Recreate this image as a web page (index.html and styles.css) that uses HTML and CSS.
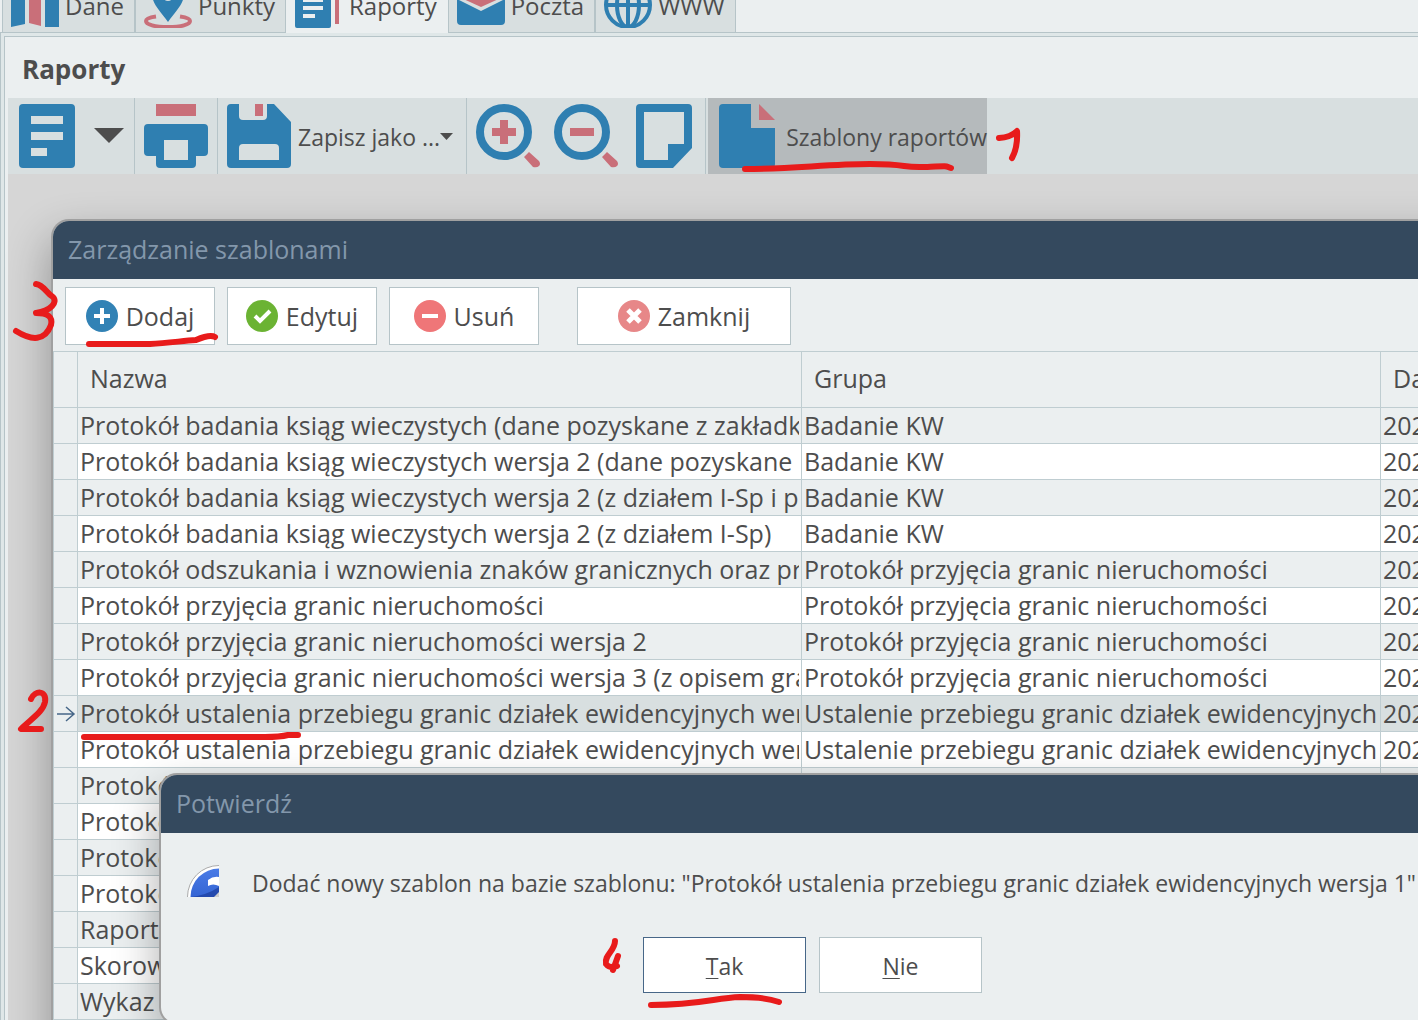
FILE: index.html
```html
<!DOCTYPE html>
<html lang="pl">
<head>
<meta charset="utf-8">
<title>Raporty</title>
<link rel="stylesheet" href="styles.css">
</head>
<body>
<div class="app">
  <nav class="tabs" aria-label="Moduły">
    <button class="tab" type="button">
      <svg class="tab-icon" viewBox="0 0 48 48"><path class="blue" d="M0 3L14 0V44L0 47zM34 0L48 3V47L34 47z"/><path class="pink" d="M18 0L30 3V46L18 43z"/></svg>Dane</button>
    <button class="tab" type="button">
      <svg class="tab-icon" viewBox="0 0 48 48"><path d="M12 36.500C5 37.500 2 39 2 41c0 3.500 9 6 22 6s22-2.500 22-6c0-2-3-3.500-10-4.500" fill="none" stroke="#c96f79" stroke-width="4"/><path class="blue" fill-rule="evenodd" d="M24 42C17 32 8 24 8 14a16 16 0 0 1 32 0c0 10-9 18-16 28zM24 21a6 6 0 0 0 0-12a6 6 0 0 0 0 12z"/></svg>Punkty</button>
    <button class="tab active" type="button">
      <svg class="tab-icon" viewBox="0 0 48 48"><path class="blue" fill-rule="evenodd" d="M2 0h32q2 0 2 2v44q0 2-2 2H2q-2 0-2-2V2q0-2 2-2zM8 18v4h20v-4zM8 26v4h20v-4zM8 34v4h12v-4z"/><path class="pink" d="M40 4h4v40h-4z"/></svg>Raporty</button>
    <button class="tab" type="button">
      <svg class="tab-icon" viewBox="0 0 48 48"><path class="blue" d="M0 19L24 31L48 19V41q0 4-4 4H4q-4 0-4-4z"/><path class="pink" d="M2 17V8H46V17L24 27z"/></svg>Poczta</button>
    <button class="tab" type="button">
      <svg class="tab-icon" viewBox="0 0 48 48"><g fill="none" stroke="#2f7fb1" stroke-width="4"><circle cx="24" cy="25" r="22"/><ellipse cx="24" cy="25" rx="11" ry="22"/><path d="M24 3v44M2 25h44"/></g></svg>WWW</button>
  </nav>

  <main class="panel">
    <h1 class="title">Raporty</h1>
    <div class="toolbar">
      <button class="tool report" type="button" aria-label="Raport">
        <svg width="56" height="64" viewBox="0 0 56 64"><path class="blue" fill-rule="evenodd" d="M4 0h48q4 0 4 4v56q0 4-4 4H4q-4 0-4-4V4q0-4 4-4zM12 12v8h32v-8zM12 28v8h32v-8zM12 44v8h16v-8z"/></svg>
        <svg width="30" height="16" viewBox="0 0 30 16"><path class="dark" d="M0 0h30L15 15z"/></svg>
      </button>
      <button class="tool" type="button" aria-label="Drukuj">
        <svg width="64" height="64" viewBox="0 0 64 64"><path class="pink" d="M12 0h40v12H12z"/><path class="blue" fill-rule="evenodd" d="M4 20h56q4 0 4 4v24q0 4-4 4h-8v8q0 4-4 4H16q-4 0-4-4v-8H4q-4 0-4-4V24q0-4 4-4zM20 36v20h24V36z"/></svg>
      </button>
      <button class="tool save" type="button">
        <svg width="64" height="64" viewBox="0 0 64 64"><path class="blue" fill-rule="evenodd" d="M4 0h8v12q0 4 4 4h20q4 0 4-4V0h7L64 18v42q0 4-4 4H4q-4 0-4-4V4q0-4 4-4zM12 44v12h40V44q0-4-4-4H16q-4 0-4 4z"/><path class="pink" d="M28 0h8v12h-8z"/></svg>
        <span>Zapisz jako ...</span>
        <svg width="13" height="7" viewBox="0 0 13 7"><path class="dark" d="M0 0h13L6.500 7z"/></svg>
      </button>
      <div class="tool-group">
        <button class="plain" type="button" aria-label="Powiększ"><svg width="64" height="64" viewBox="0 0 64 64"><circle cx="28" cy="28" r="24" fill="none" stroke="#2f7fb1" stroke-width="8"/><path class="pink" d="M24 16h8v8h8v8h-8v8h-8v-8h-8v-8h8zM53 48L63 57q2 3 0 5t-6 1L48 53z"/></svg></button>
        <button class="plain" type="button" aria-label="Pomniejsz"><svg width="64" height="64" viewBox="0 0 64 64"><circle cx="28" cy="28" r="24" fill="none" stroke="#2f7fb1" stroke-width="8"/><path class="pink" d="M16 24h24v8H16zM53 48L63 57q2 3 0 5t-6 1L48 53z"/></svg></button>
        <button class="plain page-button" type="button" aria-label="Strona"><svg width="56" height="64" viewBox="0 0 56 64"><path class="blue" fill-rule="evenodd" d="M4 0h48q4 0 4 4v40L37 64H4q-4 0-4-4V4q0-4 4-4zM8 8v48h24V40h16V8z"/></svg></button>
      </div>
      <button class="tool templates" type="button">
        <svg width="56" height="64" viewBox="0 0 56 64"><path class="blue" d="M4 0h28v24h24v36q0 4-4 4H4q-4 0-4-4V4q0-4 4-4z"/><path class="pink" d="M40 0L56 16H40z"/></svg>
        <span>Szablony raportów</span>
      </button>
    </div>
    <div class="workspace"></div>
  </main>

  <section class="window manager" aria-labelledby="manager-title">
    <h2 class="window-title" id="manager-title">Zarządzanie szablonami</h2>
    <div class="actions">
      <button class="action" type="button"><svg width="32" height="32" viewBox="0 0 32 32"><circle cx="16" cy="16" r="16" fill="#3282b5"/><path d="M16 8v16M8 16h16" stroke="#fff" stroke-width="4"/></svg>Dodaj</button>
      <button class="action" type="button"><svg width="32" height="32" viewBox="0 0 32 32"><circle cx="16" cy="16" r="16" fill="#6bb333"/><path d="M9 16l5 5L24 11" fill="none" stroke="#fff" stroke-width="4"/></svg>Edytuj</button>
      <button class="action" type="button"><svg width="32" height="32" viewBox="0 0 32 32"><circle cx="16" cy="16" r="16" fill="#ef7678"/><path d="M8 16h16" stroke="#fff" stroke-width="4"/></svg>Usuń</button>
      <button class="action close" type="button"><svg width="32" height="32" viewBox="0 0 32 32"><circle cx="16" cy="16" r="16" fill="#e78788"/><path d="M10 10l12 12M22 10L10 22" stroke="#fff" stroke-width="5"/></svg>Zamknij</button>
    </div>
    <table class="grid">
      <colgroup><col class="col-mark"><col class="col-name"><col class="col-group"><col></colgroup>
      <thead><tr><th></th><th>Nazwa</th><th>Grupa</th><th>Data</th></tr></thead>
      <tbody>
        <tr><td></td><td><div>Protokół badania ksiąg wieczystych (dane pozyskane z zakładki</div></td><td>Badanie KW</td><td>202</td></tr>
        <tr><td></td><td><div>Protokół badania ksiąg wieczystych wersja 2 (dane pozyskane</div></td><td>Badanie KW</td><td>202</td></tr>
        <tr><td></td><td><div>Protokół badania ksiąg wieczystych wersja 2 (z działem I-Sp i p</div></td><td>Badanie KW</td><td>202</td></tr>
        <tr><td></td><td><div>Protokół badania ksiąg wieczystych wersja 2 (z działem I-Sp)</div></td><td>Badanie KW</td><td>202</td></tr>
        <tr><td></td><td><div>Protokół odszukania i wznowienia znaków granicznych oraz prz</div></td><td>Protokół przyjęcia granic nieruchomości</td><td>202</td></tr>
        <tr><td></td><td><div>Protokół przyjęcia granic nieruchomości</div></td><td>Protokół przyjęcia granic nieruchomości</td><td>202</td></tr>
        <tr><td></td><td><div>Protokół przyjęcia granic nieruchomości wersja 2</div></td><td>Protokół przyjęcia granic nieruchomości</td><td>202</td></tr>
        <tr><td></td><td><div>Protokół przyjęcia granic nieruchomości wersja 3 (z opisem gra</div></td><td>Protokół przyjęcia granic nieruchomości</td><td>202</td></tr>
        <tr class="selected"><td><svg class="marker" width="20" height="16" viewBox="0 0 20 16"><path d="M1 8h17M10 1l8 7-8 7" fill="none" stroke="#476788" stroke-width="1.500"/></svg></td><td><div>Protokół ustalenia przebiegu granic działek ewidencyjnych wer</div></td><td>Ustalenie przebiegu granic działek ewidencyjnych</td><td>202</td></tr>
        <tr><td></td><td><div>Protokół ustalenia przebiegu granic działek ewidencyjnych wer</div></td><td>Ustalenie przebiegu granic działek ewidencyjnych</td><td>202</td></tr>
        <tr><td></td><td><div>Protokół</div></td><td></td><td></td></tr>
        <tr><td></td><td><div>Protokół</div></td><td></td><td></td></tr>
        <tr><td></td><td><div>Protokół</div></td><td></td><td></td></tr>
        <tr><td></td><td><div>Protokół</div></td><td></td><td></td></tr>
        <tr><td></td><td><div>Raport</div></td><td></td><td></td></tr>
        <tr><td></td><td><div>Skorowidz</div></td><td></td><td></td></tr>
        <tr><td></td><td><div>Wykaz</div></td><td></td><td></td></tr>
      </tbody>
    </table>
  </section>

  <section class="window confirm" role="dialog" aria-labelledby="confirm-title">
    <h2 class="window-title" id="confirm-title">Potwierdź</h2>
    <div class="message">
      <svg width="32" height="32" viewBox="0 0 32 32">
        <defs><linearGradient id="ball" x1="0" y1="0" x2="0" y2="1"><stop offset="0" stop-color="#4a7be6"/><stop offset=".6" stop-color="#3060d0"/><stop offset="1" stop-color="#1c3f9e"/></linearGradient></defs>
        <circle cx="32" cy="32" r="31.500" fill="#fff" stroke="#aaa"/>
        <circle cx="32" cy="32" r="28.500" fill="url(#ball)"/>
        <path d="M4 32Q20 30 32 22V32z" fill="#1d40a0" opacity=".75"/>
        <path d="M21 21V15Q26 11 32 12V21Q26 18 21 21z" fill="#fff"/><path d="M27 32l5-5v5z" fill="#ccc"/>
      </svg>
      <p>Dodać nowy szablon na bazie szablonu: "Protokół ustalenia przebiegu granic działek ewidencyjnych wersja 1"</p>
    </div>
    <div class="answers">
      <button class="answer default" type="button"><u>T</u>ak</button>
      <button class="answer" type="button"><u>N</u>ie</button>
    </div>
  </section>

  <svg class="marks" width="1418" height="1020" viewBox="0 0 1418 1020" aria-hidden="true">
    <g fill="none" stroke="#e81b1b" stroke-width="6" stroke-linecap="round" stroke-linejoin="round">
      <path d="M745 169C790 169 830 164 870 164S900 168 925 167S945 166 951 168"/>
      <path d="M999 138Q1011 137 1017 131Q1018 147 1012 158"/>
      <path d="M36 284C44 285 46 293 53 297C58 302 51 311 36 313Q54 313 51 325C45 341 32 341 16 331"/>
      <path d="M89 344H150C168 343 182 341 196 340Q210 334 215 337"/>
      <path d="M31 699C35 690 47 690 45 702C43 712 31 719 21 729H41"/>
      <path d="M84 737H265Q280 737 288 735H298"/>
      <path d="M615 941C615 951 604 955 606 964Q610 969 617 966M618 956L613 970"/>
      <path d="M651 1005C700 1005 715 998 740 997Q765 997 779 1002"/>
    </g>
  </svg>
</div>
</body>
</html>
```
FILE: styles.css
```css
* { box-sizing: border-box; }

body {
  margin: 0;
  background: #ebeff0;
  color: #4d4d4d;
  font-family: "Open Sans", "Noto Sans", sans-serif;
  font-size: 23px;
}

h1, h2, p { margin: 0; }

button {
  margin: 0;
  padding: 0;
  border: 0;
  background: none;
  color: inherit;
  font: inherit;
  white-space: nowrap;
}

svg { display: block; flex: none; }

.blue { fill: #2f7fb1; }
.pink { fill: #c96f79; }
.dark { fill: #4d4d4d; }

.app {
  position: relative;
  display: flex;
  flex-direction: column;
  height: 100vh;
  overflow: hidden;
}

/* Module tabs */
.tabs {
  display: flex;
  flex: none;
  align-items: flex-end;
  height: 33px;
  padding-left: 2px;
  border-bottom: 1px solid #b6c4c8;
}

.tab {
  display: flex;
  align-items: flex-end;
  gap: 6px;
  height: 60px;
  margin-bottom: -1px;
  padding: 0 10px 4px 8px;
  border: 1px solid #b6c4c8;
  background: #d8dfe0;
  font-size: 24px;
  line-height: 44px;
}

.tab.active { background: #ebeff0; border-color: #ebeff0; }
.tab-icon { width: 48px; height: 48px; }

/* Report panel */
.panel {
  display: flex;
  flex: 1;
  flex-direction: column;
  min-height: 0;
  margin-top: 3px;
  margin-left: 4px;
  padding-left: 3px;
  border-top: 1px solid #b6c4c8;
  border-left: 1px solid #b6c4c8;
  box-shadow: 0 0 0 3px #dfe7e8, -1px 0 0 3px #b6c4c8;
}

.title {
  padding: 4px 14px 0;
  font-size: 26px;
  line-height: 57px;
  font-weight: 700;
}

.toolbar {
  display: flex;
  flex: none;
  height: 76px;
  padding-left: 2px;
  background: #d8dfe0;
}

.tool {
  display: flex;
  align-items: center;
  gap: 7px;
  padding: 0 9px;
}

.tool span { padding-top: 2px; }

.tool + .tool,
.tool-group {
  border-left: 1px solid #b6c4c8;
}

.report { gap: 19px; padding-right: 10px; }
.save { gap: 0; padding-right: 13px; }
.save span { padding-left: 7px; }
.tool-group { display: flex; align-items: center; gap: 14px; padding: 0 13px 0 9px; border-right: 1px solid #b6c4c8; }
.page-button { margin-left: 4px; }
.templates { gap: 11px; margin-left: 2px; padding: 0 0 0 11px; background: #b5babc; }
.workspace { flex: 1; background: #d6d6d6; }

/* Floating windows */
.window {
  position: absolute;
  border-radius: 16px;
  overflow: hidden;
  background: #ebeff0;
  box-shadow: 0 0 0 2px #a0a0a0, 0 20px 44px 4px rgba(0, 0, 0, .3);
}

.manager { left: 53px; top: 221px; right: -300px; bottom: -100px; }
.confirm { left: 161px; top: 775px; right: -46px; height: 248px; }

.window-title {
  padding: 0 15px 2px;
  background: #34495e;
  color: #8397ab;
  font-size: 25px;
  font-weight: 400;
  line-height: 56px;
}

.actions { display: flex; gap: 12px; padding: 8px 12px 6px; }

.action,
.answer {
  display: flex;
  align-items: center;
  justify-content: center;
  gap: 8px;
  width: 150px;
  height: 58px;
  border: 1px solid #b6c4c8;
  background: #fff;
  font-size: 25px;
}

.action.close { width: 214px; margin-left: 26px; }

.grid {
  width: 100%;
  border-collapse: collapse;
  table-layout: fixed;
  font-size: 25px;
  line-height: 35px;
}

.col-mark { width: 24px; }
.col-name { width: 724px; }
.col-group { width: 579px; }

.grid th,
.grid td {
  height: 36px;
  padding: 0 2px;
  border: 1px solid #bfcdd1;
  font-weight: 400;
  text-align: left;
  white-space: nowrap;
}

.grid th { height: 56px; padding: 0 12px 2px; }
.grid td div { overflow: hidden; }
.grid tr:nth-child(even) td:not(:first-child) { background: #fff; }
.grid .selected td:not(:first-child) { background: #d8dfe0; }

/* Confirmation */
.message {
  display: flex;
  gap: 33px;
  padding: 32px 26px 0;
  line-height: 36px;
  white-space: nowrap;
}

.answers { display: flex; justify-content: center; gap: 13px; padding-top: 36px; }
.answer { gap: 0; width: 163px; height: 56px; padding-top: 2px; font-size: 23px; }
.answer.default { border-color: #476788; }
.answer u { text-decoration-thickness: 1px; text-underline-offset: 3px; }

/* Hand-drawn step marks */
.marks { position: absolute; left: 0; top: 0; pointer-events: none; }
```
